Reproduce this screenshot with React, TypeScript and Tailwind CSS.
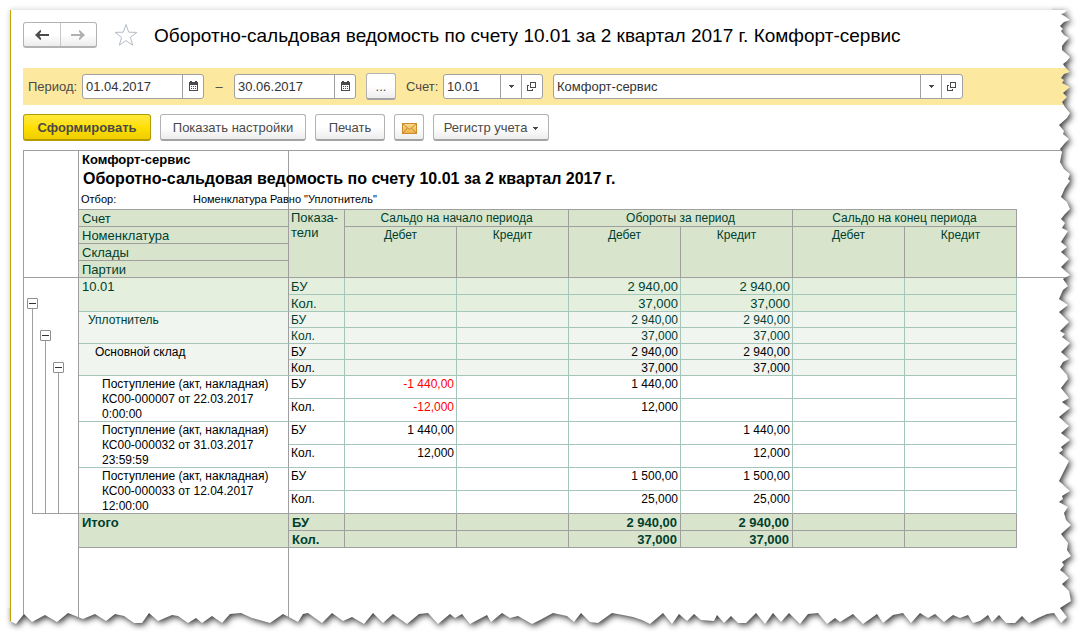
import { useState } from "react";
import type { ReactNode } from "react";

const GREY = "border-[#9f9f9f]";
const TEAL = "border-[#a5c6bb]";

type Row = {
  name: string[];
  values: string[][];
  height: string;
  nameCell: string;
  cell: string;
};

// each row has two lines: БУ and Кол.
const rows: Row[] = [
  {
    name: ["10.01"],
    values: [
      ["", "", "2 940,00", "2 940,00", "", ""],
      ["", "", "37,000", "37,000", "", ""],
    ],
    height: "h-[17px] leading-[15px]",
    nameCell: "pl-[3px]",
    cell: "bg-[#e4f0dd] text-[#003f2f] text-[13px]",
  },
  {
    name: ["Уплотнитель"],
    values: [
      ["", "", "2 940,00", "2 940,00", "", ""],
      ["", "", "37,000", "37,000", "", ""],
    ],
    height: "h-4 leading-[14px]",
    nameCell: "pl-[9px]",
    cell: "bg-[#f0f5ef] text-[#003f2f] text-[12px]",
  },
  {
    name: ["Основной склад"],
    values: [
      ["", "", "2 940,00", "2 940,00", "", ""],
      ["", "", "37,000", "37,000", "", ""],
    ],
    height: "h-4 leading-[14px]",
    nameCell: "pl-4",
    cell: "bg-[#f0f5ef] text-black text-[12px]",
  },
  {
    name: ["Поступление (акт, накладная)", "КС00-000007 от 22.03.2017", "0:00:00"],
    values: [
      ["-1 440,00", "", "1 440,00", "", "", ""],
      ["-12,000", "", "12,000", "", "", ""],
    ],
    height: "h-[23px] leading-[15px]",
    nameCell: "pl-[23px]",
    cell: "text-black text-[12px]",
  },
  {
    name: ["Поступление (акт, накладная)", "КС00-000032 от 31.03.2017", "23:59:59"],
    values: [
      ["1 440,00", "", "", "1 440,00", "", ""],
      ["12,000", "", "", "12,000", "", ""],
    ],
    height: "h-[23px] leading-[15px]",
    nameCell: "pl-[23px]",
    cell: "text-black text-[12px]",
  },
  {
    name: ["Поступление (акт, накладная)", "КС00-000033 от 12.04.2017", "12:00:00"],
    values: [
      ["", "", "1 500,00", "1 500,00", "", ""],
      ["", "", "25,000", "25,000", "", ""],
    ],
    height: "h-[23px] leading-[15px]",
    nameCell: "pl-[23px]",
    cell: "text-black text-[12px]",
  },
];

const total = [
  ["", "", "2 940,00", "2 940,00", "", ""],
  ["", "", "37,000", "37,000", "", ""],
];

const CalendarIcon = () => (
  <svg width="11" height="11" viewBox="0 0 11 11" shapeRendering="crispEdges" aria-hidden="true">
    <path d="M1 1h9v3H1zM2 0h2v1H2zM7 0h2v1H7zM1 4h1v6H1zM9 4h1v6H9zM1 9h9v1H1z" fill="#4a4a4a" />
    <path d="M3 5h1v1H3zM5 5h1v1H5zM7 5h1v1H7zM3 7h1v1H3zM5 7h1v1H5zM7 7h1v1H7z" fill="#4a4a4a" />
  </svg>
);

const OpenIcon = () => (
  <svg width="10" height="10" viewBox="0 0 10 10" shapeRendering="crispEdges" fill="none" stroke="#4a4a4a" aria-hidden="true">
    <path d="M3.5 0.5h5v5h-5z" />
    <path d="M2 3.5H0.500v5h5V7" />
  </svg>
);

const Caret = () => (
  <svg width="5" height="3" viewBox="0 0 5 3" shapeRendering="crispEdges" aria-hidden="true">
    <path d="M0 0h5v1H0zM1 1h3v1H1zM2 2h1v1H2z" fill="#4a4a4a" />
  </svg>
);

const Arrow = ({ color, flip }: { color: string; flip?: boolean }) => (
  <svg width="14" height="12" viewBox="0 0 14 12" fill={color} aria-hidden="true">
    {flip ? (
      <path d="M14 6L8.500 0.800 7.800 2.500 9.500 5H0v2h9.500L7.800 9.500l.7 1.700z" />
    ) : (
      <path d="M0 6l5.500-5.200.7 1.700L4.500 5H14v2H4.500l1.700 2.500-.7 1.700z" />
    )}
  </svg>
);

const StarIcon = () => (
  <svg width="24" height="24" viewBox="0 0 24 24" fill="#fff" stroke="#b4bcc4" aria-hidden="true">
    <path d="M12 1.500l2.700 7.700 8.200.2-6.500 5 2.300 7.800L12 17.600l-6.700 4.600 2.300-7.800-6.500-5 8.200-.2z" />
  </svg>
);

const MailIcon = () => (
  <svg width="15" height="11" viewBox="0 0 15 11" aria-hidden="true">
    <defs>
      <linearGradient id="mail" x1="0" y1="0" x2="0" y2="1">
        <stop offset="0" stopColor="#fbdc8c" />
        <stop offset="1" stopColor="#eeb04a" />
      </linearGradient>
    </defs>
    <rect x="0.5" y="0.5" width="14" height="10" fill="url(#mail)" stroke="#c98b2b" />
    <path d="M1 1l6.500 5.500L14 1M1 10l4.500-5M14 10L9.500 5" fill="none" stroke="#c98b2b" />
  </svg>
);

const Button = ({ label, className = "", children }: { label?: string; className?: string; children: ReactNode }) => (
  <button
    type="button"
    aria-label={label}
    className={`flex h-[27px] shrink-0 items-center justify-center rounded-[3px] border border-[#b3b3b3] border-b-2 border-b-[#a3a3a3] bg-linear-to-b from-white from-50% to-[#ededed] pt-[2px] text-[#4a4a4a] ${className}`}
  >
    {children}
  </button>
);

const FieldButton = ({ label, children }: { label: string; children: ReactNode }) => (
  <button type="button" aria-label={label} className="flex w-[21px] shrink-0 items-center justify-center border-l border-[#a0a0a0]">
    {children}
  </button>
);

const Field = ({ id, value, label, className, children }: { id: string; value: string; label?: string; className: string; children: ReactNode }) => (
  <div className={`flex h-[25px] overflow-hidden rounded-[3px] border border-[#a0a0a0] bg-white ${className}`}>
    <input id={id} aria-label={label} defaultValue={value} className="w-0 min-w-0 flex-1 px-[3px] pt-px text-[#333] outline-none" />
    {children}
  </div>
);

const RIGHT_EDGE =
  "1067,10 1064,13 1061,14 1066,17 1070,20 1064,22 1060,26 1063,29 1061,31 1064,35 1069,38 1065,42 1062,46 1062,50 1070,57 1067,61 1063,64 1065,67 1070,72 1064,74 1061,78 1064,80 1062,83 1070,87 1063,93 1067,97 1062,102 1065,107 1070,113 1067,118 1059,125 1064,131 1063,134 1069,139 1065,143 1060,149 1062,152 1060,162 1064,169 1070,174 1068,179 1070,181 1065,188 1061,197 1067,202 1070,209 1065,214 1061,219 1065,223 1062,228 1068,231 1061,242 1067,247 1061,252 1069,259 1061,267 1070,275 1063,279 1068,286 1063,290 1059,299 1068,305 1059,312 1069,322 1060,331 1065,334 1062,337 1070,343 1061,352 1069,359 1063,362 1060,367 1067,375 1068,379 1061,388 1069,398 1062,402 1070,408 1059,417 1069,426 1061,433 1070,440 1061,447 1063,450 1059,453 1069,461 1064,471 1059,481 1070,491 1062,496 1063,499 1059,502 1068,507 1064,513 1066,520 1071,525 1061,534 1068,543 1067,550 1071,556 1062,562 1064,565 1060,570 1064,573 1069,578 1062,584 1069,591 1071,601 1060,608 1067,617 1061,623";

const BOTTOM_EDGE =
  "1054,613 1047,614 1038,618 1029,623 1022,616 1015,623 1006,623 999,615 992,622 988,615 980,621 973,623 968,615 960,618 953,615 944,622 935,614 928,618 920,613 911,623 903,613 893,615 883,623 877,614 863,624 853,614 840,622 835,618 827,624 818,613 808,614 800,624 789,613 781,622 773,613 765,624 756,613 746,623 738,623 731,616 724,623 717,615 714,621 701,620 694,614 687,621 679,614 672,624 663,613 650,624 642,620 633,617 623,615 612,613 598,623 590,622 581,613 574,622 567,616 553,613 540,620 532,624 518,616 510,618 502,613 491,622 487,615 470,624 462,614 455,618 450,614 438,624 428,613 419,614 407,624 393,614 383,623 373,613 364,624 352,617 343,621 332,613 322,623 308,613 303,614 298,622 283,614 270,623 252,618 241,613 230,614 222,623 212,616 202,623 196,618 188,623 178,616 172,615 158,621 149,613 142,623 134,623 124,616 115,614 106,621 95,614 83,619 68,613 57,622 45,615 32,622 24,614 16,624 10,621";

const SHEET = `10,10 ${RIGHT_EDGE} ${BOTTOM_EDGE}`;
const OUTSIDE = `M${SHEET}zM-20,-20H1200V700H-20z`;

// torn paper border with a soft shadow falling to the lower right
const TornEdge = ({ id, viewBox, className }: { id: string; viewBox: string; className: string }) => (
  <svg viewBox={viewBox} className={`pointer-events-none absolute ${className}`} aria-hidden="true">
    <defs>
      <clipPath id={id}>
        <path d={OUTSIDE} clipRule="evenodd" />
      </clipPath>
      <filter id={`${id}-blur`} filterUnits="userSpaceOnUse" x="-20" y="-20" width="1220" height="720">
        <feGaussianBlur stdDeviation="3" />
      </filter>
    </defs>
    <g clipPath={`url(#${id})`}>
      <rect x="-20" y="-20" width="1220" height="720" fill="#fff" />
      <polygon points={SHEET} fill="#000" fillOpacity="0.8" transform="translate(2 2)" filter={`url(#${id}-blur)`} />
    </g>
  </svg>
);

const Outline = () => {
  const [open, setOpen] = useState([true, true, true]);
  const offsets = ["pt-5", "pt-13", "pt-21"];

  return (
    <div className="flex h-59 flex-col">
      <div className="flex flex-1 gap-[2px] pl-[3px]">
        {offsets.map((offset, i) => (
          <div key={offset} className={`flex w-[11px] flex-col items-center ${offset}`}>
            <button
              type="button"
              aria-label={`Уровень ${i + 1}`}
              aria-expanded={open[i]}
              onClick={() => setOpen(open.map((v, n) => (n === i ? !v : v)))}
              className="flex size-[11px] items-center justify-center rounded-[1px] border border-[#8f8f8f] bg-white"
            >
              <span className="h-px w-[7px] bg-[#333]" />
            </button>
            <span className="w-px flex-1 bg-[#9f9f9f]" />
          </div>
        ))}
      </div>
      <div className="ml-2 h-px bg-[#9f9f9f]" />
    </div>
  );
};

const headCell = `border-r border-b ${GREY} bg-[#d8e5cc] font-normal text-[#003f2f]`;
const totalCell = `border-r border-b ${GREY} bg-[#d8e5cc] pt-px text-[#003f2f]`;

const Report = () => (
  <table className={`w-full table-fixed border-separate border-spacing-0 border-t border-l ${GREY} text-[13px] leading-[15px]`}>
    <colgroup>
      <col className="w-[55px]" />
      <col className="w-[210px]" />
      <col className="w-14" />
      <col className="w-28" />
      <col className="w-28" />
      <col className="w-28" />
      <col className="w-28" />
      <col className="w-28" />
      <col className="w-28" />
      <col />
    </colgroup>
    <thead className="text-left align-top text-black">
      <tr className="h-[18px]">
        <td rowSpan={7} className={`border-r border-b ${GREY}`} />
        <th className={`border-r ${GREY} pt-px pl-[3px] whitespace-nowrap`}>Комфорт-сервис</th>
        <td colSpan={8} />
      </tr>
      <tr className="h-[22px]">
        <th className={`border-r ${GREY} pl-1 text-base leading-[20px] whitespace-nowrap`}>
          Оборотно-сальдовая ведомость по счету 10.01 за 2 квартал 2017 г.
        </th>
        <td colSpan={8} />
      </tr>
      <tr className="h-[19px]">
        <td className={`border-r border-b ${GREY} pt-px pl-[2px] text-[11px] whitespace-nowrap`}>
          <div className="flex">
            <span className="w-28 shrink-0">Отбор:</span>
            <span>Номенклатура Равно "Уплотнитель"</span>
          </div>
        </td>
        <td colSpan={7} className={`border-b ${GREY}`} />
        <td />
      </tr>
      <tr className="h-[17px]">
        <th className={`${headCell} pt-px pl-[3px]`}>Счет</th>
        <th rowSpan={4} className={`${headCell} pl-[2px]`}>
          Показа-
          <br />
          тели
        </th>
        <th colSpan={2} className={`${headCell} pt-px text-center text-[12px]`}>Сальдо на начало периода</th>
        <th colSpan={2} className={`${headCell} pt-px text-center text-[12px]`}>Обороты за период</th>
        <th colSpan={2} className={`${headCell} pt-px text-center text-[12px]`}>Сальдо на конец периода</th>
        <td rowSpan={4} className={`border-b ${GREY}`} />
      </tr>
      <tr className="h-[17px]">
        <th className={`${headCell} pt-px pl-[3px]`}>Номенклатура</th>
        {["Дебет", "Кредит", "Дебет", "Кредит", "Дебет", "Кредит"].map((title, i) => (
          <th key={i} rowSpan={3} className={`${headCell} pt-px text-center text-[12px]`}>{title}</th>
        ))}
      </tr>
      <tr className="h-[17px]">
        <th className={`${headCell} pt-px pl-[3px]`}>Склады</th>
      </tr>
      <tr className="h-[17px]">
        <th className={`${headCell} pt-px pl-[3px]`}>Партии</th>
      </tr>
    </thead>
    <tbody className="align-top">
      {rows.map((row, r) =>
        row.values.map((line, l) => {
          const last = r === rows.length - 1;
          const border = last && l === 1 ? "border-r-[#a5c6bb] border-b-[#9f9f9f]" : TEAL;
          return (
            <tr key={`${r}-${l}`} className={row.height}>
              {r === 0 && l === 0 && (
                <td rowSpan={12} className={`border-r ${GREY}`}>
                  <Outline />
                </td>
              )}
              {l === 0 && (
                <td rowSpan={2} className={`border-r border-b border-r-[#9f9f9f] pt-px ${last ? "border-b-[#9f9f9f]" : "border-b-[#a5c6bb]"} ${row.cell} ${row.nameCell} whitespace-nowrap`}>
                  <div className="-mb-px">
                    {row.name.map((text) => (
                      <div key={text}>{text}</div>
                    ))}
                  </div>
                </td>
              )}
              <td className={`border-r border-b pt-px pl-[2px] ${border} ${row.cell}`}>{l === 0 ? "БУ" : "Кол."}</td>
              {line.map((value, i) => (
                <td key={i} className={`border-r border-b pt-px pr-[2px] text-right ${border} ${row.cell}`}>
                  {value.startsWith("-") ? <span className="text-[#f00]">{value}</span> : value}
                </td>
              ))}
              <td />
            </tr>
          );
        }),
      )}
      {total.map((line, l) => (
        <tr key={l} className="h-[17px] font-bold">
          {l === 0 && <td rowSpan={3} className={`border-r ${GREY}`} />}
          {l === 0 && (
            <td rowSpan={2} className={`${totalCell} pl-[3px]`}>Итого</td>
          )}
          <td className={`${totalCell} pl-[3px]`}>{l === 0 ? "БУ" : "Кол."}</td>
          {line.map((value, i) => (
            <td key={i} className={`${totalCell} pr-[3px] text-right`}>{value}</td>
          ))}
          <td />
        </tr>
      ))}
      <tr className="h-19">
        <td className={`border-r ${GREY}`} />
        <td colSpan={8} />
      </tr>
    </tbody>
  </table>
);

export default function App() {
  return (
    <div className="relative overflow-hidden bg-white pt-[10px] pb-[17px] pl-[10px] font-['Liberation_Sans',Arial,sans-serif] text-[13px] text-[#4a4a4a]">
      <main className="border-l border-[#c4a000] pt-3 pl-3 shadow-[0_0_6px_rgba(0,0,0,0.2)]">
        <header className="flex h-[26px] items-center">
          <div className="flex h-[26px] w-[74px] shrink-0 overflow-hidden rounded-[3px] border border-b-2 border-[#b3b3b3] bg-linear-to-b from-white from-50% to-[#ededed]">
            <button type="button" aria-label="Назад" className="flex flex-1 items-center justify-center border-r border-[#c8c8c8]">
              <Arrow color="#4a4a4a" />
            </button>
            <button type="button" aria-label="Вперед" className="flex flex-1 items-center justify-center">
              <Arrow color="#b0b0b0" flip />
            </button>
          </div>
          <button type="button" aria-label="Добавить в избранное" className="ml-[17px]">
            <StarIcon />
          </button>
          <h1 className="ml-4 pt-[2px] text-[19px] whitespace-nowrap text-black">
            Оборотно-сальдовая ведомость по счету 10.01 за 2 квартал 2017 г. Комфорт-сервис
          </h1>
        </header>

        <form className="mt-5 flex h-[37px] items-center bg-[#fce99f] pl-[5px]">
          <label htmlFor="from" className="w-[54px] shrink-0">Период:</label>
          <Field id="from" value="01.04.2017" className="w-[122px] shrink-0">
            <FieldButton label="Календарь"><CalendarIcon /></FieldButton>
          </Field>
          <span className="w-[30px] shrink-0 text-center">–</span>
          <Field id="to" value="30.06.2017" label="Конец периода" className="w-[122px] shrink-0">
            <FieldButton label="Календарь"><CalendarIcon /></FieldButton>
          </Field>
          <Button label="Выбрать период" className="ml-[10px] w-[30px]">...</Button>
          <label htmlFor="account" className="ml-[10px] w-[37px] shrink-0">Счет:</label>
          <Field id="account" value="10.01" className="w-[100px] shrink-0">
            <FieldButton label="Выбрать"><Caret /></FieldButton>
            <FieldButton label="Открыть"><OpenIcon /></FieldButton>
          </Field>
          <Field id="company" value="Комфорт-сервис" label="Организация" className="mr-[125px] ml-[10px] flex-1">
            <FieldButton label="Выбрать"><Caret /></FieldButton>
            <FieldButton label="Открыть"><OpenIcon /></FieldButton>
          </Field>
        </form>

        <div className="mt-[9px] mb-[9px] flex gap-[9px]">
          <button
            type="button"
            className="h-[27px] w-32 rounded-[3px] border border-b-2 border-[#b39b00] bg-linear-to-b from-[#ffe93b] via-[#ffe000] to-[#f0cd00] pt-[2px] font-bold"
          >
            Сформировать
          </button>
          <Button className="w-[146px]">Показать настройки</Button>
          <Button className="w-[70px]">Печать</Button>
          <Button label="Отправить по почте" className="w-[30px]"><MailIcon /></Button>
          <Button className="w-[116px] gap-[6px]">
            Регистр учета
            <Caret />
          </Button>
        </div>

        <Report />
      </main>

      <TornEdge id="edge-right" viewBox="1052 0 36 641" className="top-0 right-0 h-[641px] w-9" />
      <TornEdge id="edge-bottom" viewBox="0 608 1052 33" className="right-9 bottom-0 h-[33px] w-[1052px]" />
    </div>
  );
}
